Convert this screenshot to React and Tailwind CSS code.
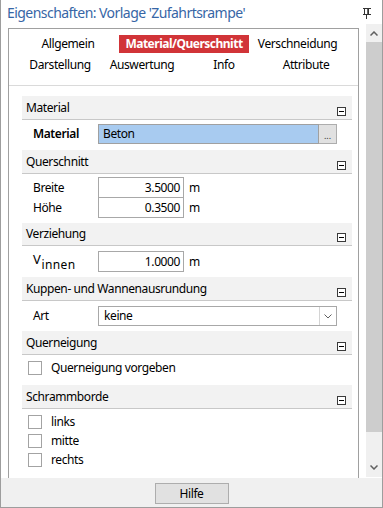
import React from "react";

const Minus = () => (
  <svg width="9" height="9" viewBox="0 0 9 9" className="block">
    <rect x="0.5" y="0.5" width="8" height="8" fill="#ffffff" stroke="#3a3a3a" />
    <line x1="2" y1="4.5" x2="7" y2="4.5" stroke="#000000" />
  </svg>
);

const Header = ({ title, h }) => (
  <div className={`flex justify-between bg-[#f2f2f2] border-b border-[#c8c8c8] pl-[4px] pr-[6px] ${h}`}>
    <span className="self-center leading-[16px] text-black">{title}</span>
    <span className="self-end mb-[3px]">
      <Minus />
    </span>
  </div>
);

const Check = ({ label }) => (
  <div className="flex items-center h-[14px] pl-[6px]">
    <div className="w-[14px] h-[14px] border border-[#a3a3a3] bg-white" />
    <span className="ml-[9px] leading-[14px] text-black">{label}</span>
  </div>
);

const NumRow = ({ label, value, extra }) => (
  <div className={`flex items-center h-[21px] ${extra}`}>
    <div className="w-[76px] pl-[11px] text-black">{label}</div>
    <div className="w-[86px] h-[21px] border border-[#a8a8a8] bg-white flex items-center justify-end pr-[3px] text-black">
      {value}
    </div>
    <span className="ml-[5px] text-black">m</span>
  </div>
);

export default function App() {
  return (
    <div className="w-[383px] h-[508px] border-x border-b border-[#9d9d9d] bg-white flex flex-col font-['Noto_Sans',sans-serif] text-[12px] tracking-[-0.4px] overflow-hidden">
      <div className="h-[478px] flex flex-col">
        <div className="h-[24px] flex items-center justify-between pl-[6px] pr-[11px]">
          <span className="text-[14px] leading-[20px] mt-[2px] text-[#3766a6] tracking-[-0.55px]">
            Eigenschaften: Vorlage 'Zufahrtsrampe'
          </span>
          <svg width="8" height="11" viewBox="0 0 8 11" className="block mt-[2px]">
            <line x1="0" y1="0.5" x2="8" y2="0.5" stroke="#333" />
            <rect x="1.5" y="0.5" width="4" height="6" fill="none" stroke="#333" />
            <line x1="5" y1="1" x2="5" y2="6" stroke="#333" strokeWidth="1.5" />
            <line x1="0" y1="6.5" x2="8" y2="6.5" stroke="#333" />
            <line x1="3.5" y1="7" x2="3.5" y2="11" stroke="#333" />
          </svg>
        </div>
        <div className="flex flex-1">
          <div className="ml-[7px] mt-[4px] w-[351px] border-l border-t border-r border-[#a0a0a0] flex flex-col">
            <div className="h-[57px] border-b border-[#dadada]">
              <div className="flex pl-[10px] mt-[6px] h-[18px] items-center">
                <div className="w-[98px] text-center text-black">Allgemein</div>
                <div className="w-[130px] h-[18px] bg-[#d13438] text-white font-bold tracking-[-0.5px] flex items-center justify-center ml-[2px]">
                  Material/Querschnitt
                </div>
                <div className="w-[97px] text-center text-black">Verschneidung</div>
              </div>
              <div className="flex pl-[10px] mt-[3px] h-[18px] items-center">
                <div className="w-[82px] text-center text-black">Darstellung</div>
                <div className="w-[82px] text-center text-black">Auswertung</div>
                <div className="w-[82px] text-center text-black">Info</div>
                <div className="w-[82px] text-center text-black">Attribute</div>
              </div>
            </div>
            <div className="ml-[13px] mr-[6px] flex flex-col">
              <div className="mt-[10px]">
                <Header title="Material" h="h-[24px]" />
              </div>
              <div className="flex items-center h-[20px] mt-[4px]">
                <div className="w-[76px] pl-[11px] font-semibold text-black">Material</div>
                <div className="w-[221px] h-[20px] bg-[#a8cbf0] border border-[#a0a0a0] flex items-center pl-[4px] text-black">
                  Beton
                </div>
                <div className="w-[18px] h-[20px] bg-[#e1e1e1] border border-[#adadad] border-l-0 flex items-end justify-center pb-[3px] text-[9px] leading-[9px] tracking-normal text-[#333]">
                  ...
                </div>
              </div>

              <div className="mt-[6px]">
                <Header title="Querschnitt" h="h-[24px]" />
              </div>
              <NumRow label="Breite" value="3.5000" extra="mt-[3px]" />
              <NumRow label="Höhe" value="0.3500" extra="-mt-px" />

              <div className="mt-[5px]">
                <Header title="Verziehung" h="h-[23px]" />
              </div>
              <div className="flex items-center h-[21px] mt-[5px]">
                <div className="w-[76px] pl-[11px] text-black">
                  <span className="text-[13px]">V</span>
                  <span className="align-[-5px] tracking-[0.4px] ml-[1px]">innen</span>
                </div>
                <div className="w-[86px] h-[21px] border border-[#a8a8a8] bg-white flex items-center justify-end pr-[3px] text-black">
                  1.0000
                </div>
                <span className="ml-[5px] text-black">m</span>
              </div>

              <div className="mt-[5px]">
                <Header title="Kuppen- und Wannenausrundung" h="h-[24px]" />
              </div>
              <div className="flex items-center h-[20px] mt-[5px]">
                <div className="w-[76px] pl-[11px] text-black">Art</div>
                <div className="w-[239px] h-[20px] border border-[#a8a8a8] bg-white flex">
                  <div className="flex-1 flex items-center pl-[5px] text-black">keine</div>
                  <div className="w-[17px] border-l border-[#d4d4d4] flex items-center justify-center">
                    <svg width="8" height="5" viewBox="0 0 8 5" className="block">
                      <polyline points="0.5,0.5 4,4 7.5,0.5" fill="none" stroke="#606060" />
                    </svg>
                  </div>
                </div>
              </div>

              <div className="mt-[5px]">
                <Header title="Querneigung" h="h-[24px]" />
              </div>
              <div className="mt-[6px]">
                <Check label="Querneigung vorgeben" />
              </div>

              <div className="mt-[10px]">
                <Header title="Schrammborde" h="h-[24px]" />
              </div>
              <div className="mt-[6px] flex flex-col gap-[5px]">
                <Check label="links" />
                <Check label="mitte" />
                <Check label="rechts" />
              </div>
            </div>
          </div>
          <div className="ml-[7px] w-[16px] h-[453px] bg-[#f0f0f0] flex flex-col">
            <div className="h-[18px] flex items-center justify-center">
              <svg width="8" height="5" viewBox="0 0 8 5" className="block">
                <polyline points="0.5,4.5 4,1 7.5,4.5" fill="none" stroke="#606060" strokeWidth="1.5" />
              </svg>
            </div>
            <div className="h-[390px] bg-[#cdcdcd]" />
            <div className="flex-1 flex items-end justify-center pb-[7px]">
              <svg width="8" height="5" viewBox="0 0 8 5" className="block">
                <polyline points="0.5,0.5 4,4 7.5,0.5" fill="none" stroke="#606060" strokeWidth="1.5" />
              </svg>
            </div>
          </div>
        </div>
      </div>
      <div className="flex-1 bg-[#f0f0f0] flex items-start justify-center pt-[5px]">
        <div className="w-[74px] h-[21px] bg-[#e1e1e1] border border-[#adadad] flex items-center justify-center text-black">
          Hilfe
        </div>
      </div>
    </div>
  );
}
